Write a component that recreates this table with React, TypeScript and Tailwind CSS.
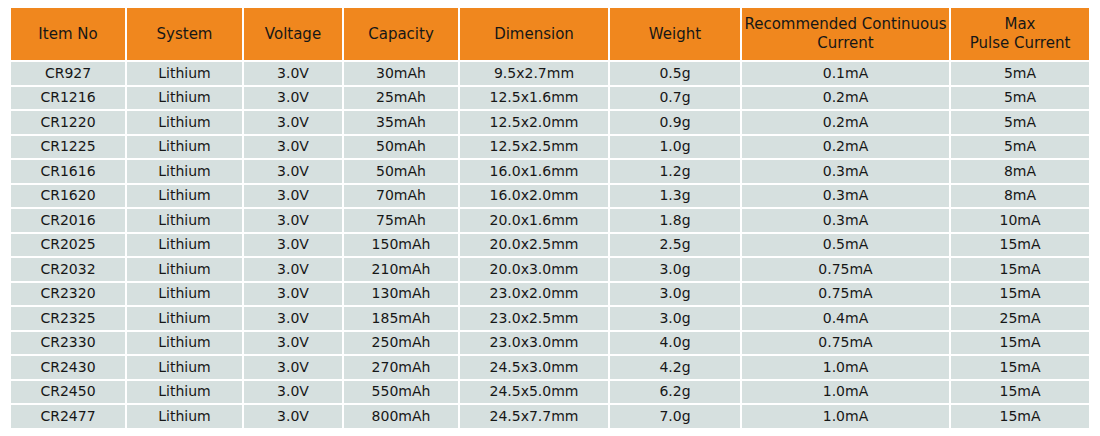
const headers = [
  ["Item No"],
  ["System"],
  ["Voltage"],
  ["Capacity"],
  ["Dimension"],
  ["Weight"],
  ["Recommended Continuous", "Current"],
  ["Max", "Pulse Current"],
];

const rows: string[][] = [
  ["CR927", "Lithium", "3.0V", "30mAh", "9.5x2.7mm", "0.5g", "0.1mA", "5mA"],
  ["CR1216", "Lithium", "3.0V", "25mAh", "12.5x1.6mm", "0.7g", "0.2mA", "5mA"],
  ["CR1220", "Lithium", "3.0V", "35mAh", "12.5x2.0mm", "0.9g", "0.2mA", "5mA"],
  ["CR1225", "Lithium", "3.0V", "50mAh", "12.5x2.5mm", "1.0g", "0.2mA", "5mA"],
  ["CR1616", "Lithium", "3.0V", "50mAh", "16.0x1.6mm", "1.2g", "0.3mA", "8mA"],
  ["CR1620", "Lithium", "3.0V", "70mAh", "16.0x2.0mm", "1.3g", "0.3mA", "8mA"],
  ["CR2016", "Lithium", "3.0V", "75mAh", "20.0x1.6mm", "1.8g", "0.3mA", "10mA"],
  ["CR2025", "Lithium", "3.0V", "150mAh", "20.0x2.5mm", "2.5g", "0.5mA", "15mA"],
  ["CR2032", "Lithium", "3.0V", "210mAh", "20.0x3.0mm", "3.0g", "0.75mA", "15mA"],
  ["CR2320", "Lithium", "3.0V", "130mAh", "23.0x2.0mm", "3.0g", "0.75mA", "15mA"],
  ["CR2325", "Lithium", "3.0V", "185mAh", "23.0x2.5mm", "3.0g", "0.4mA", "25mA"],
  ["CR2330", "Lithium", "3.0V", "250mAh", "23.0x3.0mm", "4.0g", "0.75mA", "15mA"],
  ["CR2430", "Lithium", "3.0V", "270mAh", "24.5x3.0mm", "4.2g", "1.0mA", "15mA"],
  ["CR2450", "Lithium", "3.0V", "550mAh", "24.5x5.0mm", "6.2g", "1.0mA", "15mA"],
  ["CR2477", "Lithium", "3.0V", "800mAh", "24.5x7.7mm", "7.0g", "1.0mA", "15mA"],
];

// column widths follow the picture
const cols = "grid grid-cols-[114px_115px_98px_114px_148px_130px_207px_138px] gap-[2px]";

export default function App() {
  return (
    <div className="h-[436px] w-[1100px] bg-white pl-[11px] pt-[8px] text-[#161717] [font-family:'DejaVu_Sans',sans-serif]">
      <div className="flex w-[1078px] flex-col gap-[2px]">
        <div className={cols}>
          {headers.map((lines, i) => (
            <div
              key={i}
              className="flex h-[52px] flex-col items-center justify-center bg-[#f0871e] text-center text-[15px] leading-[19px]"
            >
              {lines.map((l) => (
                <span key={l}>{l}</span>
              ))}
            </div>
          ))}
        </div>
        {rows.map((r) => (
          <div key={r[0]} className={cols}>
            {r.map((c, i) => (
              <div
                key={i}
                className="flex h-[22.5px] items-center justify-center bg-[#d6e0df] text-[14px]"
              >
                {c}
              </div>
            ))}
          </div>
        ))}
      </div>
    </div>
  );
}
